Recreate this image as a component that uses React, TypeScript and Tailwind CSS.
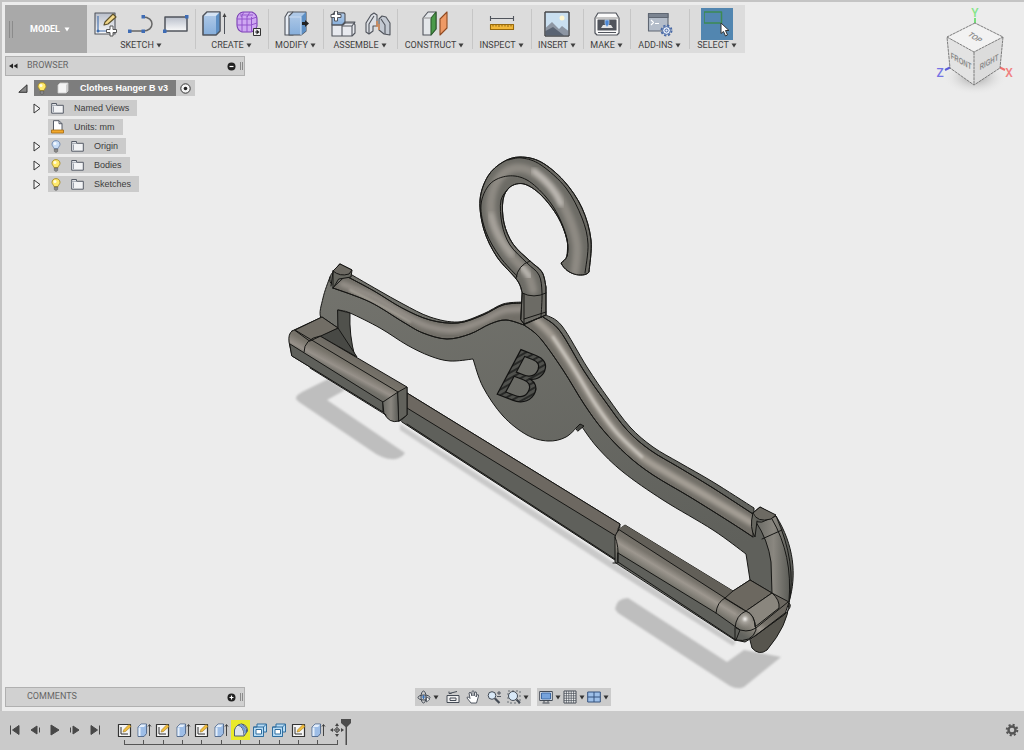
import React from "react";

type Pt = [number, number];

/** Smooth curve through a list of points. */
function through(pts: Pt[], join = false): string {
  let d = `${join ? "L" : "M"}${pts[0][0]} ${pts[0][1]}`;
  for (let i = 0; i < pts.length - 1; i++) {
    const a = pts[i - 1] ?? pts[i];
    const b = pts[i];
    const c = pts[i + 1];
    const e = pts[i + 2] ?? c;
    d += `C${b[0] + (c[0] - a[0]) / 6} ${b[1] + (c[1] - a[1]) / 6} ${c[0] - (e[0] - b[0]) / 6} ${c[1] - (e[1] - b[1]) / 6} ${c[0]} ${c[1]}`;
  }
  return d;
}
const back = (pts: Pt[]): Pt[] => [...pts].reverse();

/* ---------- hanger geometry ---------- */
const leftTop: Pt[] = [[352, 275], [378, 290], [403, 304], [430, 317], [458, 322], [483, 314], [503, 304], [522, 302]];
const leftRim: Pt[] = [[346, 276], [374, 291], [402, 308], [430, 320], [458, 323], [483, 315], [503, 305], [522, 303]];
const leftLow: Pt[] = [[333, 288], [370, 302], [403, 322], [423, 333], [447, 339], [470, 334], [490, 324], [506, 320], [524, 325]];
const leftMid: Pt[] = [[342, 284], [374, 297], [403, 314], [427, 326], [454, 330], [480, 322], [503, 311], [522, 309]];
const rightTop: Pt[] = [[546, 315], [562, 326], [587, 367], [608, 398], [630, 427], [653, 447], [680, 463], [713, 482], [754, 508]];
const rightRim: Pt[] = [[543, 317], [560, 331], [584, 371], [605, 401], [627, 430], [650, 450], [680, 468], [713, 488], [753, 514]];
const rightLow: Pt[] = [[524, 325], [540, 338], [563, 370], [584, 404], [603, 430], [627, 455], [653, 475], [690, 497], [730, 522], [753, 537]];
const rightMid: Pt[] = [[536, 320], [553, 337], [574, 369], [596, 405], [617, 433], [642, 457], [669, 474], [710, 498], [752, 523]];
const disc: Pt[] = [[473, 359], [483, 387], [503, 416], [527, 435], [548, 441], [566, 437], [580, 424]];
const armLowL: Pt[] = [[338, 310], [350, 313], [380, 328], [407, 345], [430, 356], [450, 361], [473, 359]];
const armLowR: Pt[] = [[580, 424], [597, 447], [623, 472], [663, 500], [713, 530], [746, 554]];
const hookOut: Pt[] = [[522, 292], [517, 280], [497, 257], [484, 230], [480, 200], [488, 176], [503, 162], [520, 157], [541, 162], [564, 181], [582, 208], [591, 240], [589, 272]];
const hookIn: Pt[] = [[561, 263], [567, 256], [567, 240], [558, 217], [541, 195], [524, 184], [510, 187], [503, 200], [504, 223], [513, 244], [530, 261], [542, 272], [546, 287]];
const hookFront: Pt[] = [[517, 276], [500, 257], [486, 232], [481, 205], [490, 184], [508, 176], [527, 180], [546, 197], [559, 217], [567, 239], [567, 256]];
const hookRim: Pt[] = [[508, 160], [522, 158], [541, 165], [566, 188], [582, 218], [588, 244], [585, 273]];
const hookMid: Pt[] = [[533, 290], [527, 273], [508, 252], [494, 226], [491, 200], [500, 177], [517, 168], [536, 174], [556, 193], [570, 220], [577, 246], [575, 272]];

const armD =
  through([[333, 272], [330, 277], [323, 298], [321, 318], [338, 328]]) +
  through(armLowL, true) + through(disc, true) + through(armLowR, true) +
  "L750 580 L772 594 L789 602 C797 575 794 545 776 516 L760 507 L754 512" +
  through(back(rightTop), true) + through(back(leftTop), true) + "L340 264Z";
const hookD = through(hookOut) + "C586 277 568 277 561 263" + through(hookIn, true) + "L546 315 L524 324 L521 320Z";
const tubeLD = through(leftRim) + through(back(leftLow), true) + "Z";
const tubeRD = through(rightRim) + through(back(rightLow), true) + "Z";

function Hanger() {
  return (
    <svg viewBox="0 0 1022 709" className="absolute inset-0 h-full w-full" role="img" aria-label="Clothes Hanger B">
      <defs>
        <linearGradient id="face" x1="0" y1="0" x2="0.3" y2="1"><stop offset="0" stopColor="#74746e" /><stop offset="1" stopColor="#5f605b" /></linearGradient>
        <linearGradient id="roll" gradientUnits="userSpaceOnUse" x1="352" y1="355" x2="337" y2="383"><stop offset="0" stopColor="#6f6b64" /><stop offset="0.3" stopColor="#77736a" /><stop offset="0.55" stopColor="#97918a" /><stop offset="0.7" stopColor="#74726b" /><stop offset="1" stopColor="#62635e" /></linearGradient>
        <linearGradient id="rollR" gradientUnits="userSpaceOnUse" x1="681" y1="560" x2="664" y2="588"><stop offset="0" stopColor="#6b6760" /><stop offset="0.35" stopColor="#78746c" /><stop offset="0.55" stopColor="#9d978f" /><stop offset="0.8" stopColor="#77756d" /><stop offset="1" stopColor="#62635e" /></linearGradient>
        <linearGradient id="endcap" x1="0" y1="0" x2="1" y2="0"><stop offset="0" stopColor="#6a6a64" /><stop offset="0.5" stopColor="#8a8780" /><stop offset="1" stopColor="#575853" /></linearGradient>
        <radialGradient id="knob"><stop offset="0" stopColor="#f3f1ee" /><stop offset="0.3" stopColor="#a9a59e" /><stop offset="1" stopColor="#74716a" stopOpacity="0" /></radialGradient>
        <pattern id="hatch" width="5" height="5" patternUnits="userSpaceOnUse" patternTransform="rotate(-50)"><rect width="5" height="5" fill="#50514d" /><path d="M0 0H5V2H0z" fill="#292a28" /></pattern>
        <filter id="soft" x="-10%" y="-10%" width="120%" height="120%"><feGaussianBlur stdDeviation="2" /></filter>
        <filter id="faint"><feGaussianBlur stdDeviation="0.8" /></filter>
        <clipPath id="cl"><path d={tubeLD} /></clipPath>
        <clipPath id="cr"><path d={tubeRD} /></clipPath>
        <clipPath id="ch"><path d={hookD} /></clipPath>
      </defs>
      <g transform="translate(-2 -2)">
        <g fill="#bebebe" filter="url(#faint)">
          <path d="M296 399Q295 395 306 390L328 379L345 390L327 400L405 453Q400 460 391 459Q385 459 376 454L299 402Z" />
          <path d="M615 609Q617 598 628 598L727 662L744 650L781 657L744 687Q738 690 730 686L618 613Z" />
          <path d="M400 424L618 565L736 642L733 646L615 571L400 430Z" fill="#c9c9c9" />
        </g>

        <g stroke="#171715" strokeWidth="1" strokeLinejoin="round" strokeLinecap="round">
          {/* lower bar */}
          <path d="M407 393L620 524L618 562L402 422Z" fill="#5f605b" />
          <path d="M407 393L620 524L616 536L407 408Z" fill="#6d6861" />
          <path d="M407 424L615 559" fill="none" />

          {/* front face */}
          <path d={armD} fill="url(#face)" />
          {/* inner wall of the left opening */}
          <path d="M338 310L350 313Q349 335 355 357L339 347Z" fill="#50514c" />
          <path d="M576 428L580 424L584 426L578 431Z" fill="#454642" />

          {/* rounded rims */}
          <path d={tubeLD} fill="#716e67" />
          <g clipPath="url(#cl)" fill="none">
            <path d={through(leftMid)} stroke="#96918a" strokeWidth="6" filter="url(#soft)" />
            <path d="M350 290Q385 307 410 322" stroke="#aaa59c" strokeWidth="2" filter="url(#faint)" />
          </g>
          <path d={through(leftLow)} fill="none" />
          <path d={through(leftRim)} fill="none" />
          <path d={tubeRD} fill="#706d66" />
          <g clipPath="url(#cr)" fill="none">
            <path d={through(rightMid)} stroke="#a7a198" strokeWidth="7" filter="url(#soft)" />
            <path d={through(rightMid.slice(1, 6))} stroke="#c9c5be" strokeWidth="2.5" filter="url(#faint)" />
          </g>
          <path d={through(rightLow)} fill="none" />
          <path d={through(rightRim)} fill="none" />

          {/* hook */}
          <path d={hookD} fill="#6c6b65" />
          <g clipPath="url(#ch)" fill="none">
            <path d={through(hookMid)} stroke="#8e8a83" strokeWidth="9" filter="url(#soft)" />
            <path d="M534 171Q554 186 561 204" stroke="#c4c0ba" strokeWidth="5" filter="url(#soft)" />
            <path d="M491 215Q495 235 512 254" stroke="#aaa69f" strokeWidth="5" filter="url(#soft)" />
            <path d="M522 267L530 277" stroke="#c7c4be" strokeWidth="4" filter="url(#soft)" />
          </g>
          <path d={hookD} fill="none" />
          <path d={through(hookFront)} fill="none" />
          <path d={through(hookRim)} fill="none" />
          <path d={through([[510, 187], [501, 200], [502, 224], [510, 245], [527, 263], [539, 275], [542, 293], [541, 317]])} fill="none" />
          <path d="M516 278Q518 265 530 261M522 293Q534 299 546 293M524 294V324M524 319L546 312" fill="none" />

          {/* left end */}
          <path d="M333 288V271L340 264L352 270L351 277L339 279Z" fill="#66665f" />
          <path d="M333 271L340 264L352 270L349 274Q340 277 333 271Z" fill="#6d6a63" />
          <path d="M330 277Q329 283 332 284M331 286L333 272" fill="none" />

          {/* left clip */}
          <path d="M338 328L357 357L320 336Z" fill="#484945" />
          <path d="M292 331L322 317L338 328L320 336L407 387V415L400 421L394 420L383 412L310 367L292 356L289 342Q288 334 292 331Z" fill="url(#roll)" />
          <path d="M295 330L322 317L338 328L310 341Z" fill="#716d65" />
          <path d="M290 344L383 402V412L310 367L292 356Z" fill="#5f605b" />
          <path d="M383 402L398 392L399 421Q389 424 384 413Z" fill="url(#endcap)" />
          <path d="M398 392L407 387V415L399 421Z" fill="#62625c" />
          <path d="M295 330L398 392M320 336Q304 339 304 352M310 368L386 415" fill="none" />

          {/* right end */}
          <path d="M756 522Q768 540 771 562L772 594L789 603Q797 563 776 516L762 522Z" fill="url(#endcap)" />
          <path d="M772 519Q793 555 789 601M762 539L782 530" fill="none" />
          <path d="M753 513L760 507L776 515L771 519Q757 523 753 513Z" fill="#6d6a63" />
          <path d="M753 513Q749 528 755 537L757 521" fill="#66665f" />

          {/* right clip */}
          <path d="M785 614Q793 606 789 603Q788 625 767 650Q759 656 752 648L750 640Z" fill="#57554e" />
          <path d="M615 562V537Q616 531 625 525L733 591L750 580L772 593L789 602L785 614L755 636L745 642L735 640Z" fill="url(#rollR)" />
          <path d="M618 553L716 613L740 630L736 640L618 562Z" fill="#5f605b" />
          <path d="M618 529L625 525L733 591L725 598Z" fill="#625f58" stroke="none" />
          <path d="M725 598L733 591L750 580L772 593L746 611Z" fill="#6c6860" />
          <path d="M746 611L772 593Q780 600 779 608L755 627Q755 615 746 611Z" fill="#8a867e" />
          <circle cx="745" cy="619" r="11" fill="url(#knob)" stroke="none" />
          <path d="M735 640V628Q736 615 746 611Q755 614 756 630Q752 643 735 640Z" fill="none" />
          <path d="M736 628Q746 634 756 628L788 602M755 636L785 613M618 529L725 598L746 611M716 613Q717 602 725 598M613 563H618Q619 545 615 537" fill="none" />
        </g>

        {/* engraved initial */}
        <text x="494" y="393" transform="rotate(21 494 393)" fill="url(#hatch)" stroke="#111110" strokeWidth="1.2" className="font-['Lato'] text-[70px] italic">B</text>
      </g>
    </svg>
  );
}

function ViewCube() {
  return (
    <svg viewBox="932 7 88 92" className="mr-1 mt-[5px] h-[92px] w-[88px] shrink-0" role="img" aria-label="View cube">
      <defs>
        <radialGradient id="cubeShade"><stop offset="0" stopColor="#9a9a9a" /><stop offset="1" stopColor="#ececec" stopOpacity="0" /></radialGradient>
      </defs>
      <ellipse cx="975" cy="77" rx="32" ry="18" fill="url(#cubeShade)" />
      <path d="M975 18V23" stroke="#4fdc55" strokeWidth="1.5" />
      <path d="M945 70L951 67" stroke="#5a5ad8" strokeWidth="2" />
      <path d="M999 67L1005 70" stroke="#f07070" strokeWidth="2" />
      <path d="M975 23L947 37L974 52L1003 37Z" fill="#f2f2f2" />
      <path d="M947 37L974 52V85L950 68Z" fill="#e3e3e3" />
      <path d="M1003 37L974 52V85L1000 68Z" fill="#dcdcdc" />
      <path d="M975 23L947 37L950 68L974 85L1000 68L1003 37ZM947 37L974 52L1003 37M974 52V85" fill="none" stroke="#707070" strokeWidth="0.9" strokeDasharray="3 0.6" />
      <g className="font-['Liberation_Sans'] text-[8px] font-bold" fill="#8b8b8b" textAnchor="middle">
        <text transform="matrix(0.7 0.45 -0.8 0.6 973 39)">TOP</text>
        <text transform="matrix(0.75 0.42 0 1.1 961 64)">FRONT</text>
        <text transform="matrix(0.75 -0.42 0 1.1 989 65)">RIGHT</text>
      </g>
      <g className="font-['Roboto'] text-[12px] font-medium" textAnchor="middle">
        <text x="975" y="17" fill="#86e58a">Y</text>
        <text x="940" y="77" fill="#7474e4">Z</text>
        <text x="1009" y="77" fill="#f08080">X</text>
      </g>
    </svg>
  );
}

/* ---------- toolbar icons, 26 x 26 ---------- */
function Icon({ children }: { children: React.ReactNode }) {
  return (
    <svg viewBox="0 0 26 26" className="h-[26px] w-[26px]" aria-hidden="true" stroke="#50545c" strokeWidth="1.1" fill="none" strokeLinejoin="round">
      <defs>
        <linearGradient id="sheet" x1="0" y1="0" x2="0" y2="1"><stop offset="0" stopColor="#b9bfcb" /><stop offset="1" stopColor="#fafafa" /></linearGradient>
        <linearGradient id="steel" x1="0" y1="0" x2="0" y2="1"><stop offset="0" stopColor="#b3cce9" /><stop offset="1" stopColor="#86aedb" /></linearGradient>
      </defs>
      {children}
    </svg>
  );
}
const SketchIcon = () => (
  <Icon>
    <path d="M2 2H22V23H2Z" fill="url(#sheet)" />
    <path d="M5 5V20H14" stroke="#3e6cab" /><circle cx="5" cy="20" r="1.5" fill="#3e6cab" stroke="none" />
    <path d="M11 14L12 11L20 3L23 6L15 13Z" fill="#f4d98a" stroke="#5d512a" />
    <path d="M17 15H20V18.500H23.500V21.500H20V25H17V21.500H13.500V18.500H17Z" fill="#fff" stroke="#555" strokeWidth="1" />
  </Icon>
);
const LineIcon = () => (
  <Icon>
    <path d="M2 20H15M15 6C27 6 27 20 15 20" stroke="#666" strokeWidth="1.5" />
    <path d="M0 18.500H3.500V22H0ZM13.500 18.500H17V22H13.500ZM13.500 4H17V7.500H13.500Z" fill="#3e6cb5" stroke="none" />
  </Icon>
);
const RectIcon = () => (
  <Icon>
    <path d="M2 6H24V20H2Z" fill="url(#sheet)" strokeWidth="1.500" />
    <path d="M0 18.500H3.500V22H0ZM22 4H25.500V7.500H22Z" fill="#3e6cb5" stroke="none" />
  </Icon>
);
const ExtrudeIcon = () => (
  <Icon>
    <path d="M2 5L6 1H19V20L15 24H2Z" fill="url(#steel)" /><path d="M2 5L6 1H19L15 5Z" fill="#d4e3f4" stroke="none" />
    <path d="M15 5L19 1V20L15 24Z" fill="#5d8fc4" stroke="none" /><path d="M2 5L6 1H19V20L15 24H2Z" />
    <path d="M23.500 23V5" strokeWidth="1" /><path d="M23.500 2L25.500 6H21.500Z" fill="#444" stroke="none" />
  </Icon>
);
const FormIcon = () => (
  <Icon>
    <path d="M1 7Q2 2 7 1H16Q21 3 21 8V15Q20 20 15 21H6Q1 19 1 14Z" fill="#cfa8f2" stroke="#7a3fb4" />
    <path d="M1 8H15L21 6M1 14H15L21 12M6 5V21M11 5V21M15.500 6V21M4 4H17M8 1L5 6M14 1L11 6" stroke="#9355cc" strokeWidth="1" />
    <path d="M17.500 17.500H24.500V24.500H17.500Z" fill="#eee" stroke="#333" strokeWidth="1" /><path d="M19 21H22" /><path d="M20.500 18.500L23.500 21L20.500 23.500Z" fill="#222" stroke="none" />
  </Icon>
);
const ModifyIcon = () => (
  <Icon>
    <path d="M2 6L5 1H10V24H2Z" fill="#e7edf5" /><path d="M6 5L10 1H23V20L18 24H6Z" fill="url(#steel)" />
    <path d="M18 6L23 1V20L18 24Z" fill="#5d8fc4" stroke="none" /><path d="M6 6H18V24" stroke="#c9dcf2" />
    <path d="M19 12.500H23" stroke="#222" strokeWidth="3" /><path d="M22 9L26 12.500L22 16Z" fill="#222" stroke="none" />
  </Icon>
);
const JoinIcon = () => (
  <Icon>
    <path d="M2 14L4 2H14V12H24L25 14V22L22 25H2Z" fill="#e8eaef" /><path d="M4 2H14L15 3V12L13 14H2V4Z" fill="url(#steel)" />
    <path d="M2 14H12V25M12 14L15 11H25L22 15H12M22 15V25" />
    <path d="M4.500 0H7.500V3.500H11V6.500H7.500V10H4.500V6.500H1V3.500H4.500Z" fill="#fff" strokeWidth="1" />
  </Icon>
);
const JointIcon = () => (
  <Icon>
    <path d="M1 12L6 4L9 2L12 4V15L8 15V20L4 23L1 21Z" fill="#dcdfe4" /><path d="M25 12L21 6L17 5L14 8V19L19 23L25 24Z" fill="#c3c9d2" />
    <path d="M4 23V13L9 5M20 23V14L16 8" /><path d="M12 10V16M14 13V19" stroke="#d98a52" strokeWidth="1.500" />
  </Icon>
);
const PlanesIcon = () => (
  <Icon>
    <path d="M1 7L6 1H14V18L9 24H1Z" fill="#e4e7ea" /><path d="M9 7L14 1V18L9 24Z" fill="#4b9a49" stroke="#2c5d2b" />
    <path d="M18 8L25 1V17L18 24Z" fill="#ee9a66" stroke="#8f4a22" /><path d="M1 7H9" stroke="#999" />
  </Icon>
);
const MeasureIcon = () => (
  <Icon>
    <path d="M1.500 7.500H24.500M1.500 5V10M24.500 5V10" strokeWidth="1.100" />
    <path d="M1.500 13.500H24.500V18.500H1.500Z" fill="#f2b83a" stroke="#97690d" /><path d="M4 14V15.500M7 14V15.500M10 14V16M13 14V15.500M16 14V15.500M19 14V16M22 14V15.500" stroke="#8d6413" strokeWidth="1" />
  </Icon>
);
const InsertIcon = () => (
  <Icon>
    <path d="M1 1H25V25H1Z" fill="#c9dff0" strokeWidth="1" /><circle cx="18" cy="7" r="2.500" fill="#fff7d2" stroke="none" />
    <path d="M1.500 17L8 11L15 18L18 15L24.500 20V24.500H1.500Z" fill="#8d96a3" stroke="none" /><path d="M1.500 20L9 16L20 24.500H1.500Z" fill="#5a6473" stroke="none" />
    <path d="M1 1H25V25H1Z" stroke="#444" strokeWidth="1" />
  </Icon>
);
const MakeIcon = () => (
  <Icon>
    <path d="M4 2H22L25 7V22L23 24H3L1 22V7Z" fill="#fafafa" strokeWidth="1.200" /><path d="M1 7H25" stroke="#999" />
    <path d="M4 9H22V19H4Z" fill="#50545c" /><path d="M7 17L9 14H17L19 17Z" fill="#e4e4e4" stroke="none" /><path d="M11 9H15V13L13 16L11 13Z" fill="#4b86d4" stroke="#cfe0f5" strokeWidth="0.600" /><path d="M4 21.500H22" strokeWidth="1" />
  </Icon>
);
const AddInsIcon = () => (
  <Icon>
    <path d="M1.500 2.500H21V20H1.500Z" fill="#b4bdca" stroke="#5f6773" /><path d="M1.500 2.500H21V6.500H1.500Z" fill="#7b8491" stroke="#5f6773" />
    <path d="M4 9L6.500 11.500L4 14M8 12.500H12" stroke="#fff" />
    <circle cx="19.500" cy="19.500" r="5" stroke="#4a6aa5" strokeWidth="2" strokeDasharray="2.200 1.730" /><circle cx="19.500" cy="19.500" r="3.900" fill="#e6eefa" stroke="#4a6aa5" strokeWidth="1" /><circle cx="19.500" cy="19.500" r="1.500" stroke="#4a6aa5" strokeWidth="1" />
  </Icon>
);
const SelectIcon = () => (
  <span className="flex h-8 w-8 items-center justify-center bg-[#5286b0]">
    <Icon>
      <path d="M0 1H17.500V12H0Z" stroke="#3c8a52" strokeWidth="1.500" />
      <path d="M17 12V22.500L19.500 20.500L21.500 25L23.500 24L21.500 19.500H25Z" fill="#fff" stroke="#333" strokeWidth="1" />
    </Icon>
  </span>
);

function Caret({ className = "" }: { className?: string }) {
  return (
    <svg viewBox="0 0 6 5" className={`h-[5px] w-[6px] shrink-0 ${className}`} aria-hidden="true"><path d="M0.500 0.500H5.500L3 4.500Z" fill="currentColor" /></svg>
  );
}

const groups = [
  { label: "SKETCH", width: "w-[108px]", icons: [SketchIcon, LineIcon, RectIcon], gap: "gap-[9px]" },
  { label: "CREATE", width: "w-[73px]", icons: [ExtrudeIcon, FormIcon], gap: "gap-[9px]" },
  { label: "MODIFY", width: "w-[55px]", icons: [ModifyIcon], gap: "" },
  { label: "ASSEMBLE", width: "w-[74px]", icons: [JoinIcon, JointIcon], gap: "gap-[9px]" },
  { label: "CONSTRUCT", width: "w-[75px]", icons: [PlanesIcon], gap: "" },
  { label: "INSPECT", width: "w-[59px]", icons: [MeasureIcon], gap: "" },
  { label: "INSERT", width: "w-[52px]", icons: [InsertIcon], gap: "" },
  { label: "MAKE", width: "w-[47px]", icons: [MakeIcon], gap: "" },
  { label: "ADD-INS", width: "w-[59px]", icons: [AddInsIcon], gap: "" },
  { label: "SELECT", width: "w-[56px]", icons: [SelectIcon], gap: "" },
];

function Toolbar() {
  return (
    <nav className="flex h-12 w-fit bg-[#dcdcdc] font-['Roboto',sans-serif] text-[9px] leading-[11px] text-[#3f3f3f]">
      <button className="relative flex w-[82px] items-center justify-center gap-1 bg-[#a9a9a9] pl-2 font-bold text-white">
        <span className="absolute left-1 top-4 h-[17px] w-1 border-x border-[#8b8b8b]" />
        MODEL <Caret />
      </button>
      {groups.map((g, i) => (
        <button key={g.label} className={`${g.width} relative flex flex-col items-center pt-[3px]`}>
          {i > 0 && <span className="absolute left-0 top-1 h-10 w-px bg-[#c6c6c6]" />}
          <span className={`flex h-8 items-center ${g.gap}`}>{g.icons.map((I, k) => <I key={k} />)}</span>
          <span className="flex items-center gap-[2px] whitespace-nowrap">{g.label} <Caret /></span>
        </button>
      ))}
    </nav>
  );
}

function PanelBar({ title, open, arrows }: { title: string; open: boolean; arrows?: boolean }) {
  return (
    <header className="flex h-5 w-60 items-center border border-[#b0b0b0] bg-[#d1d1d1] font-['Roboto',sans-serif] text-[9px] text-[#666]">
      <span className="flex w-[21px] pl-[3px]">
        {arrows && <svg viewBox="0 0 9 6" className="h-[6px] w-[9px]" aria-hidden="true"><path d="M4 0.500V5.500L0 3ZM8.500 0.500V5.500L4.500 3Z" fill="#222" /></svg>}
      </span>
      <h2 className="flex-1">{title}</h2>
      <button aria-label={open ? `Collapse ${title}` : `Expand ${title}`} className="mr-1">
        <svg viewBox="0 0 9 9" className="h-[9px] w-[9px]"><circle cx="4.500" cy="4.500" r="4" fill="#222" /><path d={open ? "M2.500 4.500H6.500" : "M2.500 4.500H6.500M4.500 2.500V6.500"} stroke="#fff" strokeWidth="1.200" /></svg>
      </button>
      <span className="mr-px h-2 w-[3px] border-x border-[#8a8a8a]" />
    </header>
  );
}

/* ---------- browser tree ---------- */
const Bulb = ({ off }: { off?: boolean }) => (
  <svg viewBox="0 0 10 13" className="h-[13px] w-[10px]" aria-hidden="true">
    <path d="M5 0.600C2.600 0.600 1 2.200 1 4.300C1 6 2.600 6.800 3 8.600H7C7.400 6.800 9 6 9 4.300C9 2.200 7.400 0.600 5 0.600Z" fill={off ? "#c6dcf6" : "#ffe96b"} stroke={off ? "#6e86ab" : "#a68a25"} strokeWidth="0.900" />
    <circle cx="4" cy="3.500" r="1.500" fill="#fff" opacity="0.800" /><path d="M3.300 9H6.700V11.500L5 12.500L3.300 11.500Z" fill="#8a8a8a" stroke="#555" strokeWidth="0.500" />
  </svg>
);
const Folder = () => (
  <svg viewBox="0 0 13 12" className="h-3 w-[13px]" aria-hidden="true"><path d="M0.700 1.500H5.500V3.300H12.300V11.200H0.700Z" fill="#f2f3f5" stroke="#555b66" /><path d="M0.700 3.300H5.500M2.500 4.500V10" stroke="#9aa0ab" /></svg>
);
const Ruler = () => (
  <svg viewBox="0 0 13 14" className="h-[14px] w-[13px]" aria-hidden="true"><path d="M2.500 0.700H8L11 3.700V10.500H2.500Z" fill="#fff" stroke="#555b66" /><path d="M8 0.700V3.700H11" fill="none" stroke="#555b66" /><path d="M0.500 10H12.500V13H0.500Z" fill="#f2a82c" stroke="#a56a10" strokeWidth="0.800" /></svg>
);
const rows = [
  { label: "Named Views", bulb: "", icon: "folder", twist: true },
  { label: "Units: mm", bulb: "", icon: "ruler", twist: false },
  { label: "Origin", bulb: "off", icon: "folder", twist: true },
  { label: "Bodies", bulb: "on", icon: "folder", twist: true },
  { label: "Sketches", bulb: "on", icon: "folder", twist: true },
];

function Tree() {
  return (
    <div className="mt-1 pl-[13px] font-['Liberation_Sans',sans-serif] text-[9px] leading-4 text-[#3c3c3c]">
      <div className="flex h-4 items-center">
        <button aria-label="Collapse" className="w-4">
          <svg viewBox="0 0 10 9" className="h-[9px] w-[10px]"><path d="M9 0.800V8.300H0.800Z" fill="#888" stroke="#333" /></svg>
        </button>
        <div className="flex h-4 items-center bg-[#cbcbcb]">
          <button className="flex h-4 items-center bg-[#7d7d7d] pl-[3px] pr-2 font-bold text-white">
            <Bulb />
            <svg viewBox="0 0 12 12" className="ml-[10px] h-3 w-3" aria-hidden="true"><path d="M1 3L3 1H11V9L9 11H1Z" fill="#f4f4f4" stroke="#ccc" strokeWidth="0.800" /><path d="M9 3L11 1V9L9 11Z" fill="#cfcfcf" /></svg>
            <span className="ml-[11px]">Clothes Hanger B v3</span>
          </button>
          <button aria-label="Activate" className="px-1">
            <svg viewBox="0 0 11 11" className="h-[11px] w-[11px]"><circle cx="5.500" cy="5.500" r="4.700" fill="#f5f5f5" stroke="#333" /><circle cx="5.500" cy="5.500" r="1.800" fill="#222" /></svg>
          </button>
        </div>
      </div>
      <ul className="mt-1 flex flex-col gap-[3px] pl-[15px]">
        {rows.map((r) => (
          <li key={r.label} className="flex h-4 items-center">
            <span className="flex w-[15px]">
              {r.twist && <button aria-label={`Expand ${r.label}`}><svg viewBox="0 0 8 11" className="h-[11px] w-2"><path d="M1 1L7 5.500L1 10Z" fill="#f4f4f4" stroke="#333" /></svg></button>}
            </span>
            <button className="flex h-4 items-center bg-[#cbcbcb] pl-[3px] pr-2">
              {r.bulb && <span className="mr-[10px]"><Bulb off={r.bulb === "off"} /></span>}
              {r.icon === "folder" ? <Folder /> : <Ruler />}
              <span className="ml-[10px]">{r.label}</span>
            </button>
          </li>
        ))}
      </ul>
    </div>
  );
}

/* ---------- navigation bar ---------- */
function NavIcon({ label, children, menu }: { label: string; children: React.ReactNode; menu?: boolean }) {
  return (
    <button aria-label={label} className="flex items-center gap-[2px] text-[#333]">
      <svg viewBox="0 0 14 14" className="h-[14px] w-[14px]" fill="none" stroke="#444b55" strokeLinejoin="round">{children}</svg>
      {menu && <Caret />}
    </button>
  );
}
function NavBar() {
  return (
    <div className="flex gap-[6px]">
      <div className="flex h-[18px] w-[116px] items-center justify-between bg-[#cbcbcb] px-[2px]">
        <NavIcon label="Orbit" menu><ellipse cx="7" cy="7.500" rx="6" ry="2.500" /><ellipse cx="6.500" cy="7" rx="2.500" ry="6" /><path d="M4.500 7H8.500M6.500 5V9" stroke="#3971b8" /><path d="M9.500 7L13 9L9.500 12Z" fill="#fff" strokeWidth="0.800" /></NavIcon>
        <NavIcon label="Look at"><path d="M1 5.500H13V12.500H1ZM4 8H10V10.500H4Z" fill="#eee" /><path d="M3 3.500L11 1.500M3 1.500V3.500H5.500" /></NavIcon>
        <NavIcon label="Pan"><path d="M5 13L1 8Q1 6.500 2.500 7L4 8.500L3 3Q4 1.500 5 3L6 6V1.500Q7 0 8 1.500V6L9 2Q10.500 1.500 10.500 3L10 7L11.500 4.500Q13 4.500 12.500 6L10.500 13Z" fill="#fff" strokeWidth="0.900" /></NavIcon>
        <NavIcon label="Zoom"><circle cx="5" cy="5.500" r="3.800" fill="#d9e9f8" /><path d="M8 8.500L12.500 13" strokeWidth="2.200" /><path d="M10 3H14M12 1V5M10 6.500H14" strokeWidth="0.900" /></NavIcon>
        <NavIcon label="Fit" menu><path d="M1 1H13V13H1Z" strokeDasharray="2 2" strokeWidth="0.700" /><circle cx="6" cy="6" r="4.500" fill="#d9e9f8" /><path d="M9.500 9.500L13 13" strokeWidth="2.200" /></NavIcon>
      </div>
      <div className="flex h-[18px] w-[74px] items-center justify-between bg-[#cbcbcb] px-[2px]">
        <NavIcon label="Display settings" menu><path d="M0.700 1.500H13.300V10.500H0.700Z" fill="#e8eef6" /><path d="M2.500 3H11.500V9H2.500Z" fill="#76a3dc" stroke="#3f6aa5" /><path d="M5 10.500V12.500M9 10.500V12.500M3.500 13H10.500" /></NavIcon>
        <NavIcon label="Grid" menu><path d="M1 1H13V13H1Z" fill="#f2f2f2" /><path d="M3.400 1V13M5.800 1V13M8.200 1V13M10.600 1V13M1 3.400H13M1 5.800H13M1 8.200H13M1 10.600H13" strokeWidth="0.700" /></NavIcon>
        <NavIcon label="Viewports" menu><path d="M0.700 2H13.300V12H0.700Z" fill="#9dbfe8" stroke="#34527f" /><path d="M7 2V12M0.700 7H13.300" stroke="#34527f" /></NavIcon>
      </div>
    </div>
  );
}

/* ---------- timeline ---------- */
function StepIcon({ kind }: { kind: string }) {
  return (
    <svg viewBox="0 0 16 16" className="h-4 w-4" fill="none" stroke="#333" strokeLinejoin="round" aria-hidden="true">
      {kind === "sketch" && (<><path d="M1.500 2.500H13.500V14.500H1.500Z" fill="#f5f5f5" strokeWidth="1.200" /><path d="M4 5V12H11" /><path d="M6 10L7 7.500L12 2.500L14 4.500L8.500 9.500Z" fill="#f2bd3b" stroke="#a07a24" strokeWidth="0.600" /></>)}
      {kind === "extrude" && (<><path d="M2 5L5 2H10.500V11.500L8 14.500H2Z" fill="#9dbde6" stroke="#4d6488" strokeWidth="0.900" /><path d="M2.500 5L5 2.500H10L8 5Z" fill="#e4eefa" stroke="none" /><path d="M3.500 5.500V14" stroke="#e4eefa" strokeWidth="2" /><path d="M13.500 14V3M12 4.500L13.500 2.500L15 4.500" strokeWidth="0.900" /></>)}
      {kind === "fillet" && (<><path d="M1.500 14V8Q3 2.500 8.500 2Q14.500 3 14.500 9L11 14Z" fill="#dde4ec" stroke="#4d5d73" /><path d="M5 3Q11 5 11 13.500M8.500 2Q14.500 5 13.500 10.500" stroke="#4d5d73" /><path d="M7 3Q12 5 12.300 11" stroke="#6f9bd6" strokeWidth="2" /></>)}
      {kind === "combine" && (<><path d="M5 2H14.500V10H11.500V14.500H1.500V5H5Z" fill="#b8dcf5" stroke="#2f6d9e" /><path d="M1.500 5H11.500V14.500M11.500 5L14.500 2" stroke="#2f6d9e" /><path d="M4 7.500H9.500V12H4Z" fill="#fff" stroke="#2f6d9e" /></>)}
      {kind === "move" && (<><path d="M8 4.500V11.500M4.500 8H11.500" strokeDasharray="1.500 1" /><path d="M8 1L10 4H6ZM8 15L6 12H10ZM1 8L4 6V10ZM15 8L12 10V6Z" fill="#444" stroke="none" /><circle cx="8" cy="8" r="2" strokeWidth="0.800" /></>)}
    </svg>
  );
}
const steps = ["sketch", "extrude", "sketch", "extrude", "sketch", "extrude", "fillet", "combine", "combine", "sketch", "extrude", "move"];
const transport = [
  { label: "Go to start", d: "M2.500 2.500V11.500M11 2.500V11.500L4.500 7Z" },
  { label: "Step back", d: "M9 3V11L3 7ZM11.500 4.500V9.500" },
  { label: "Play", d: "M3 2V12L11 7Z" },
  { label: "Step forward", d: "M5 3V11L11 7ZM2.500 4.500V9.500" },
  { label: "Go to end", d: "M11.500 2.500V11.500M3 2.500V11.500L9.500 7Z" },
];

function Timeline() {
  return (
    <footer className="flex h-[39px] shrink-0 items-start bg-[#cacaca] pl-[5px] pr-[5px]">
      <div className="flex pt-[9px]">
        {transport.map((t) => (
          <button key={t.label} aria-label={t.label} className="flex h-5 w-5 items-center justify-center">
            <svg viewBox="0 0 14 14" className="h-[14px] w-[14px]"><path d={t.d} fill="#484848" stroke="#484848" /></svg>
          </button>
        ))}
      </div>
      <div className="ml-[10px] w-[232px] pt-[9px]">
        <ol className="flex">
          {steps.map((s, i) => (
            <li key={i} className="flex flex-1 flex-col items-center">
              <button aria-label={s} className={`flex h-5 w-[19px] items-center justify-center ${s === "fillet" ? "bg-[#e9ea2b]" : ""}`}><StepIcon kind={s} /></button>
              <span className="h-1 w-px bg-[#555]" />
            </li>
          ))}
        </ol>
        <div className="mx-[9px] h-px bg-[#555]" />
      </div>
      <svg viewBox="0 0 10 26" className="-ml-[6px] mt-2 h-[26px] w-[10px]" aria-hidden="true"><path d="M0 0H10V4L6 8V26H4.500V8L0 4Z" fill="#4d4d4d" /></svg>
      <button aria-label="Settings" className="ml-auto mt-3">
        <svg viewBox="0 0 14 14" className="h-[14px] w-[14px]" fill="none" stroke="#555"><circle cx="7" cy="7" r="5.300" strokeWidth="2" strokeDasharray="2.080 2.080" /><circle cx="7" cy="7" r="3.500" strokeWidth="2.400" /></svg>
      </button>
    </footer>
  );
}

export default function App() {
  return (
    <div className="flex h-screen flex-col overflow-hidden bg-[#ececec] font-['Liberation_Sans',sans-serif]">
      <main className="relative flex min-h-0 flex-1 flex-col border-l-2 border-t-2 border-[#c4c4c4]">
        <Hanger />
        <div className="relative flex items-start justify-between">
          <div className="pl-[3px] pt-[3px]">
            <Toolbar />
            <section className="mt-[3px]">
              <PanelBar title="BROWSER" open arrows />
              <Tree />
            </section>
          </div>
          <ViewCube />
        </div>
        <div className="relative mt-auto grid grid-cols-[1fr_auto_1fr] items-center pb-1">
          <section className="pl-[3px]"><PanelBar title="COMMENTS" open={false} /></section>
          <NavBar />
        </div>
      </main>
      <Timeline />
    </div>
  );
}
